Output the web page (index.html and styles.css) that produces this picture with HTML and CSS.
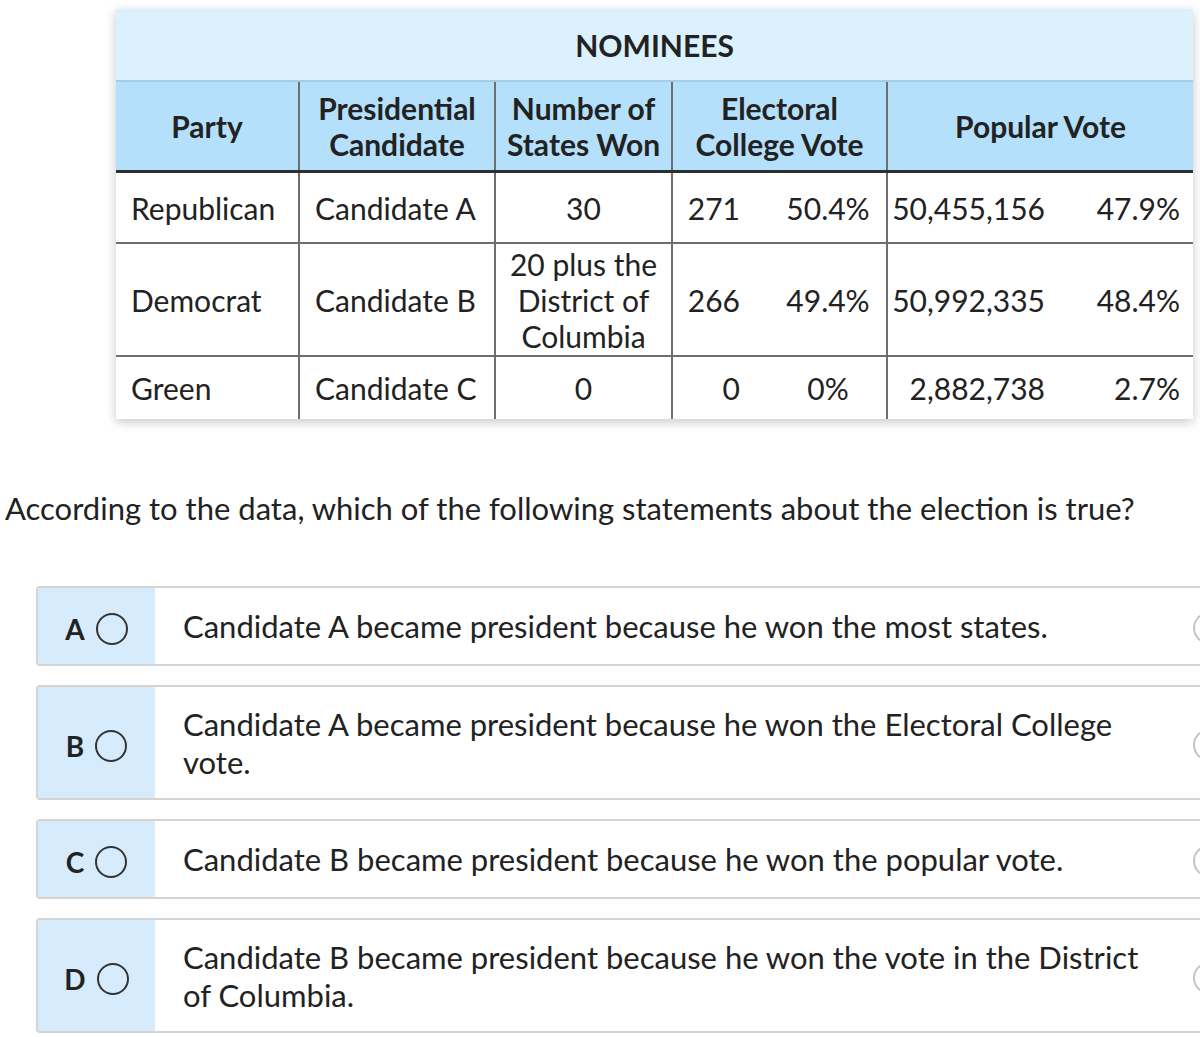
FILE: index.html
```html
<!DOCTYPE html>
<html lang="en">
<head>
  <meta charset="UTF-8">
  <meta name="viewport" content="width=device-width, initial-scale=1.0">
  <title>Election Question</title>
  <link rel="stylesheet" href="styles.css">
</head>
<body>
  <div class="page">
    <div class="table-wrap">
      <table class="results">
        <colgroup>
          <col class="c-party">
          <col class="c-cand">
          <col class="c-states">
          <col class="c-ec-num">
          <col class="c-ec-pct">
          <col class="c-pop-num">
          <col class="c-pop-pct">
        </colgroup>
        <thead>
          <tr class="title-row">
            <th colspan="7">NOMINEES</th>
          </tr>
          <tr class="head-row">
            <th>Party</th>
            <th>Presidential<br>Candidate</th>
            <th>Number of<br>States Won</th>
            <th colspan="2">Electoral<br>College Vote</th>
            <th colspan="2">Popular Vote</th>
          </tr>
        </thead>
        <tbody>
          <tr class="row-a">
            <td>Republican</td>
            <td>Candidate A</td>
            <td class="center">30</td>
            <td class="ec-num">271</td>
            <td class="ec-pct">50.4%</td>
            <td class="pop-num">50,455,156</td>
            <td class="pop-pct">47.9%</td>
          </tr>
          <tr class="row-b">
            <td>Democrat</td>
            <td>Candidate B</td>
            <td class="center">20 plus the<br>District of<br>Columbia</td>
            <td class="ec-num">266</td>
            <td class="ec-pct">49.4%</td>
            <td class="pop-num">50,992,335</td>
            <td class="pop-pct">48.4%</td>
          </tr>
          <tr class="row-c">
            <td>Green</td>
            <td>Candidate C</td>
            <td class="center">0</td>
            <td class="ec-num">0</td>
            <td class="ec-pct">0%</td>
            <td class="pop-num">2,882,738</td>
            <td class="pop-pct">2.7%</td>
          </tr>
        </tbody>
      </table>
    </div>

    <p class="question">According to the data, which of the following statements about the election is true?</p>

    <div class="options">
      <div class="option">
        <div class="option-key"><span class="letter">A</span><span class="radio"></span></div>
        <div class="option-text">Candidate A became president because he won the most states.</div>
        <span class="strike"></span>
      </div>
      <div class="option tall">
        <div class="option-key"><span class="letter">B</span><span class="radio"></span></div>
        <div class="option-text">Candidate A became president because he won the Electoral College vote.</div>
        <span class="strike"></span>
      </div>
      <div class="option">
        <div class="option-key"><span class="letter">C</span><span class="radio"></span></div>
        <div class="option-text">Candidate B became president because he won the popular vote.</div>
        <span class="strike"></span>
      </div>
      <div class="option tall">
        <div class="option-key"><span class="letter">D</span><span class="radio"></span></div>
        <div class="option-text">Candidate B became president because he won the vote in the District of Columbia.</div>
        <span class="strike"></span>
      </div>
    </div>
  </div>
</body>
</html>
```

FILE: styles.css
```css
html, body {
  margin: 0;
  padding: 0;
  overflow: hidden;
  background: #ffffff;
}

body {
  font-family: 'Lato', 'Open Sans', sans-serif;
  color: #222;
}

.page {
  width: 1260px;
  padding: 9px 0 0 5px;
}

.table-wrap {
  margin-left: 111px;
  width: 1077px;
  box-shadow: 0 3px 10px rgba(0, 0, 0, 0.22);
}

.results {
  width: 100%;
  border-collapse: collapse;
  table-layout: fixed;
  font-size: 30px;
  line-height: 36px;
}

.c-party { width: 183px; }
.c-cand { width: 196px; }
.c-states { width: 177px; }
.c-ec-num { width: 98px; }
.c-ec-pct { width: 117px; }
.c-pop-num { width: 173px; }
.c-pop-pct { width: 133px; }

.results th,
.results td {
  padding: 0;
  border: 2px solid #6e6e6e;
}

.results th {
  padding: 0 2px;
  font-weight: 700;
}

.title-row th {
  background: #dbf2fe;
  height: 71px;
  border: none;
  border-bottom: 2px solid #a5cde6;
}

.head-row th {
  background: #b4e0fb;
  height: 88px;
  border-top: none;
  border-bottom: 3px solid #2f2f2f;
}

.results tr > :first-child { border-left: none; }
.results tr > :last-child { border-right: none; }
.results tbody tr:last-child td { border-bottom: none; }

.results td {
  padding: 0 0 0 15px;
  vertical-align: middle;
  white-space: nowrap;
}

.row-a td { height: 69px; }
.row-b td { height: 111px; }
.row-c td { height: 62px; }

.results td.center { text-align: center; padding: 0 2px; }

.results td.ec-num {
  text-align: right;
  padding: 0 30px 0 0;
  border-right: none;
}
.results td.ec-pct {
  text-align: center;
  padding: 0;
  border-left: none;
}
.results td.pop-num {
  text-align: right;
  padding: 0 15px 0 0;
  border-right: none;
}
.results td.pop-pct {
  text-align: right;
  padding: 0 13px 0 0;
  border-left: none;
}

.question {
  margin: 70px 0 0 0;
  font-size: 31px;
  line-height: 38px;
}

.options {
  margin: 59px 0 0 31px;
  display: flex;
  flex-direction: column;
  gap: 19px;
}

.option {
  display: flex;
  align-items: stretch;
  width: 1200px;
  min-height: 76px;
  border: 2px solid #d4d4d4;
  border-radius: 4px;
  position: relative;
}

.option.tall { min-height: 111px; }

.option-key {
  width: 117px;
  flex-shrink: 0;
  background: #d6ebfc;
  display: flex;
  align-items: center;
  justify-content: center;
  gap: 11px;
  padding-top: 6px;
  box-sizing: border-box;
}

.letter {
  font-weight: 700;
  font-size: 28px;
}

.radio {
  width: 28px;
  height: 28px;
  border: 2px solid #333;
  border-radius: 50%;
}

.option-text {
  width: 965px;
  padding: 0 0 0 28px;
  display: flex;
  align-items: center;
  font-size: 31px;
  line-height: 38px;
}

.strike {
  position: absolute;
  left: 1155px;
  top: 50%;
  width: 28px;
  height: 28px;
  margin-top: -14px;
  border: 2px solid #c4c4c4;
  border-radius: 50%;
}
```
